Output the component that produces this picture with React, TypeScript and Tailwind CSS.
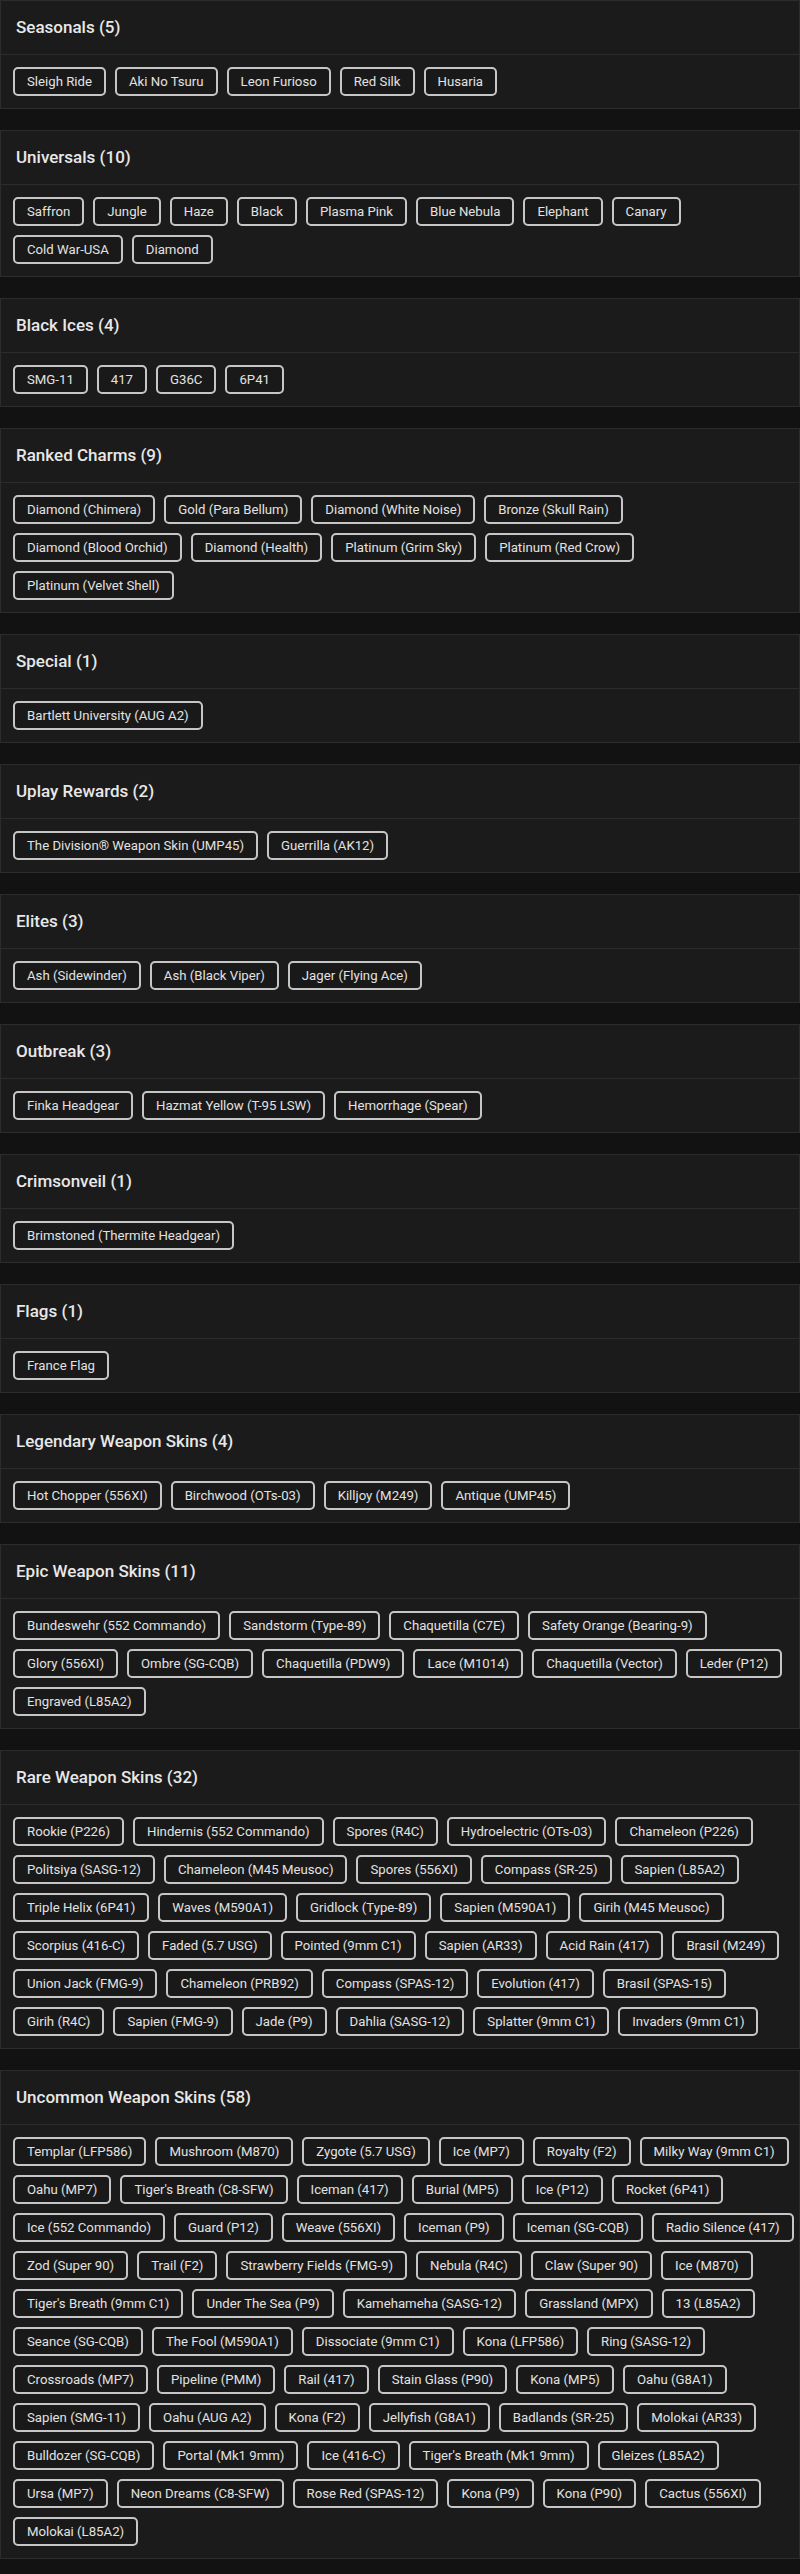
type Section = {
  title: string
  rows: string[][]
}

const sections: Section[] = [
  { title: "Seasonals", rows: [["Sleigh Ride", "Aki No Tsuru", "Leon Furioso", "Red Silk", "Husaria"]] },
  {
    title: "Universals",
    rows: [
      ["Saffron", "Jungle", "Haze", "Black", "Plasma Pink", "Blue Nebula", "Elephant", "Canary"],
      ["Cold War-USA", "Diamond"],
    ],
  },
  { title: "Black Ices", rows: [["SMG-11", "417", "G36C", "6P41"]] },
  {
    title: "Ranked Charms",
    rows: [
      ["Diamond (Chimera)", "Gold (Para Bellum)", "Diamond (White Noise)", "Bronze (Skull Rain)"],
      ["Diamond (Blood Orchid)", "Diamond (Health)", "Platinum (Grim Sky)", "Platinum (Red Crow)"],
      ["Platinum (Velvet Shell)"],
    ],
  },
  { title: "Special", rows: [["Bartlett University (AUG A2)"]] },
  { title: "Uplay Rewards", rows: [["The Division® Weapon Skin (UMP45)", "Guerrilla (AK12)"]] },
  { title: "Elites", rows: [["Ash (Sidewinder)", "Ash (Black Viper)", "Jager (Flying Ace)"]] },
  { title: "Outbreak", rows: [["Finka Headgear", "Hazmat Yellow (T-95 LSW)", "Hemorrhage (Spear)"]] },
  { title: "Crimsonveil", rows: [["Brimstoned (Thermite Headgear)"]] },
  { title: "Flags", rows: [["France Flag"]] },
  {
    title: "Legendary Weapon Skins",
    rows: [["Hot Chopper (556XI)", "Birchwood (OTs-03)", "Killjoy (M249)", "Antique (UMP45)"]],
  },
  {
    title: "Epic Weapon Skins",
    rows: [
      ["Bundeswehr (552 Commando)", "Sandstorm (Type-89)", "Chaquetilla (C7E)", "Safety Orange (Bearing-9)"],
      ["Glory (556XI)", "Ombre (SG-CQB)", "Chaquetilla (PDW9)", "Lace (M1014)", "Chaquetilla (Vector)", "Leder (P12)"],
      ["Engraved (L85A2)"],
    ],
  },
  {
    title: "Rare Weapon Skins",
    rows: [
      ["Rookie (P226)", "Hindernis (552 Commando)", "Spores (R4C)", "Hydroelectric (OTs-03)", "Chameleon (P226)"],
      ["Politsiya (SASG-12)", "Chameleon (M45 Meusoc)", "Spores (556XI)", "Compass (SR-25)", "Sapien (L85A2)"],
      ["Triple Helix (6P41)", "Waves (M590A1)", "Gridlock (Type-89)", "Sapien (M590A1)", "Girih (M45 Meusoc)"],
      ["Scorpius (416-C)", "Faded (5.7 USG)", "Pointed (9mm C1)", "Sapien (AR33)", "Acid Rain (417)", "Brasil (M249)"],
      ["Union Jack (FMG-9)", "Chameleon (PRB92)", "Compass (SPAS-12)", "Evolution (417)", "Brasil (SPAS-15)"],
      ["Girih (R4C)", "Sapien (FMG-9)", "Jade (P9)", "Dahlia (SASG-12)", "Splatter (9mm C1)", "Invaders (9mm C1)"],
    ],
  },
  {
    title: "Uncommon Weapon Skins",
    rows: [
      ["Templar (LFP586)", "Mushroom (M870)", "Zygote (5.7 USG)", "Ice (MP7)", "Royalty (F2)", "Milky Way (9mm C1)"],
      ["Oahu (MP7)", "Tiger's Breath (C8-SFW)", "Iceman (417)", "Burial (MP5)", "Ice (P12)", "Rocket (6P41)"],
      ["Ice (552 Commando)", "Guard (P12)", "Weave (556XI)", "Iceman (P9)", "Iceman (SG-CQB)", "Radio Silence (417)"],
      ["Zod (Super 90)", "Trail (F2)", "Strawberry Fields (FMG-9)", "Nebula (R4C)", "Claw (Super 90)", "Ice (M870)"],
      ["Tiger's Breath (9mm C1)", "Under The Sea (P9)", "Kamehameha (SASG-12)", "Grassland (MPX)", "13 (L85A2)"],
      ["Seance (SG-CQB)", "The Fool (M590A1)", "Dissociate (9mm C1)", "Kona (LFP586)", "Ring (SASG-12)"],
      ["Crossroads (MP7)", "Pipeline (PMM)", "Rail (417)", "Stain Glass (P90)", "Kona (MP5)", "Oahu (G8A1)"],
      ["Sapien (SMG-11)", "Oahu (AUG A2)", "Kona (F2)", "Jellyfish (G8A1)", "Badlands (SR-25)", "Molokai (AR33)"],
      ["Bulldozer (SG-CQB)", "Portal (Mk1 9mm)", "Ice (416-C)", "Tiger's Breath (Mk1 9mm)", "Gleizes (L85A2)"],
      ["Ursa (MP7)", "Neon Dreams (C8-SFW)", "Rose Red (SPAS-12)", "Kona (P9)", "Kona (P90)", "Cactus (556XI)"],
      ["Molokai (L85A2)"],
    ],
  },
]

const Chip = ({ label }: { label: string }) => (
  <span className="flex h-[29px] items-center rounded-[5px] border-2 border-[#c6c6c6] bg-[#191919] px-[12px] text-[13.2px] leading-none whitespace-nowrap text-[#e2e2e2]">
    {label}
  </span>
)

const Card = ({ section }: { section: Section }) => {
  const count = section.rows.reduce((n, row) => n + row.length, 0)

  return (
    <div className="border border-[#2c2c2c] bg-[#1b1b1b]">
      <div className="flex h-[54px] items-center border-b border-[#2c2c2c] px-[15px]">
        <h2 className="text-[17px] font-medium text-[#e8e8e8]">
          {section.title} ({count})
        </h2>
      </div>
      <div className="flex flex-col gap-[9px] p-3">
        {section.rows.map((row, i) => (
          <div key={i} className="flex gap-[9px]">
            {row.map((item) => (
              <Chip key={item} label={item} />
            ))}
          </div>
        ))}
      </div>
    </div>
  )
}

export default function App() {
  return (
    <div className="flex min-h-screen w-[800px] flex-col gap-[21px] bg-[#121212] font-['Roboto',sans-serif]">
      {sections.map((section) => (
        <Card key={section.title} section={section} />
      ))}
    </div>
  )
}
